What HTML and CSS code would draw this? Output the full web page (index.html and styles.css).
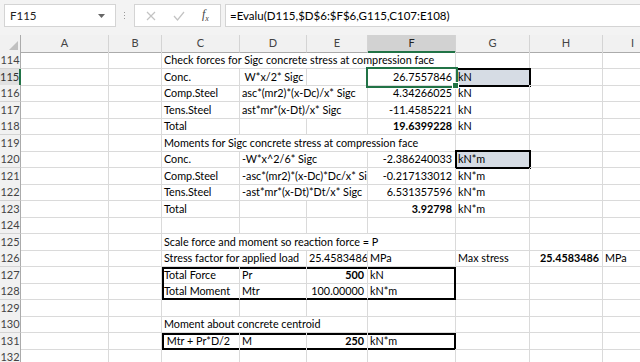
FILE: index.html
```html
<!DOCTYPE html>
<html lang="en">
<head>
  <meta charset="UTF-8">
  <title>Sheet</title>
  <link rel="stylesheet" href="styles.css">
</head>
<body>

  <div class="formula-bar">
    <div class="name-box">
      <span>F115</span>
      <svg class="drop" width="7" height="4" viewBox="0 0 7 4"><path d="M0 0h7L3.5 4z" fill="#666"/></svg>
    </div>
    <div class="grip"><i></i><i></i><i></i></div>
    <div class="buttons">
      <svg width="10" height="10" viewBox="0 0 10 10"><path d="M1 1l8 8M9 1L1 9" stroke="#c3c3c3" stroke-width="1.2" fill="none"/></svg>
      <svg width="12" height="10" viewBox="0 0 12 10"><path d="M1 5l3.5 4L11 1" stroke="#c3c3c3" stroke-width="1.2" fill="none"/></svg>
      <span class="fx">f<sub>x</sub></span>
    </div>
    <div class="formula">=Evalu(D115,$D$6:$F$6,G115,C107:E108)</div>
  </div>

  <div class="sheet">
    <div class="row head">
      <div class="corner"><svg width="9" height="9" viewBox="0 0 9 9"><path d="M9 0v9H0z" fill="#c0c0c0"/></svg></div>
      <div class="ch">A</div><div class="ch">B</div><div class="ch">C</div><div class="ch">D</div><div class="ch">E</div>
      <div class="ch sel">F</div>
      <div class="ch">G</div><div class="ch">H</div><div class="ch">I</div>
    </div>

    <div class="row">
      <div class="rh">114</div><div class="cell"></div><div class="cell"></div>
      <div class="cell span4">Check forces for Sigc concrete stress at compression face</div>
      <div class="cell"></div><div class="cell"></div><div class="cell"></div>
    </div>
    <div class="row">
      <div class="rh sel-row">115</div><div class="cell"></div><div class="cell"></div>
      <div class="cell">Conc.</div><div class="cell">&nbsp;W*x/2* Sigc</div><div class="cell"></div>
      <div class="cell num active">26.7557846</div>
      <div class="cell boxed">kN</div><div class="cell"></div><div class="cell"></div>
    </div>
    <div class="row">
      <div class="rh">116</div><div class="cell"></div><div class="cell"></div>
      <div class="cell">Comp.Steel</div><div class="cell span2">asc*(mr2)*(x-Dc)/x* Sigc</div>
      <div class="cell num">4.34266025</div>
      <div class="cell">kN</div><div class="cell"></div><div class="cell"></div>
    </div>
    <div class="row">
      <div class="rh">117</div><div class="cell"></div><div class="cell"></div>
      <div class="cell">Tens.Steel</div><div class="cell span2">ast*mr*(x-Dt)/x* Sigc</div>
      <div class="cell num">-11.4585221</div>
      <div class="cell">kN</div><div class="cell"></div><div class="cell"></div>
    </div>
    <div class="row">
      <div class="rh">118</div><div class="cell"></div><div class="cell"></div>
      <div class="cell">Total</div><div class="cell"></div><div class="cell"></div>
      <div class="cell num bold">19.6399228</div>
      <div class="cell">kN</div><div class="cell"></div><div class="cell"></div>
    </div>
    <div class="row">
      <div class="rh">119</div><div class="cell"></div><div class="cell"></div>
      <div class="cell span4">Moments for Sigc concrete stress at compression face</div>
      <div class="cell"></div><div class="cell"></div><div class="cell"></div>
    </div>
    <div class="row">
      <div class="rh">120</div><div class="cell"></div><div class="cell"></div>
      <div class="cell">Conc.</div><div class="cell span2">-W*x^2/6* Sigc</div>
      <div class="cell num">-2.386240033</div>
      <div class="cell boxed">kN*m</div><div class="cell"></div><div class="cell"></div>
    </div>
    <div class="row">
      <div class="rh">121</div><div class="cell"></div><div class="cell"></div>
      <div class="cell">Comp.Steel</div><div class="cell span2">-asc*(mr2)*(x-Dc)*Dc/x* Sigc</div>
      <div class="cell num">-0.217133012</div>
      <div class="cell">kN*m</div><div class="cell"></div><div class="cell"></div>
    </div>
    <div class="row">
      <div class="rh">122</div><div class="cell"></div><div class="cell"></div>
      <div class="cell">Tens.Steel</div><div class="cell span2">-ast*mr*(x-Dt)*Dt/x* Sigc</div>
      <div class="cell num">6.531357596</div>
      <div class="cell">kN*m</div><div class="cell"></div><div class="cell"></div>
    </div>
    <div class="row">
      <div class="rh">123</div><div class="cell"></div><div class="cell"></div>
      <div class="cell">Total</div><div class="cell"></div><div class="cell"></div>
      <div class="cell num bold">3.92798</div>
      <div class="cell">kN*m</div><div class="cell"></div><div class="cell"></div>
    </div>
    <div class="row">
      <div class="rh">124</div><div class="cell"></div><div class="cell"></div>
      <div class="cell"></div><div class="cell"></div><div class="cell"></div><div class="cell"></div>
      <div class="cell"></div><div class="cell"></div><div class="cell"></div>
    </div>
    <div class="row">
      <div class="rh">125</div><div class="cell"></div><div class="cell"></div>
      <div class="cell span4">Scale force and moment so reaction force = P</div>
      <div class="cell"></div><div class="cell"></div><div class="cell"></div>
    </div>
    <div class="row">
      <div class="rh">126</div><div class="cell"></div><div class="cell"></div>
      <div class="cell span2">Stress factor for applied load</div>
      <div class="cell num">25.4583486</div>
      <div class="cell">MPa</div>
      <div class="cell">Max stress</div>
      <div class="cell num bold">25.4583486</div>
      <div class="cell">MPa</div>
    </div>
    <div class="row">
      <div class="rh">127</div><div class="cell"></div><div class="cell"></div>
      <div class="cell bl bt">Total Force</div><div class="cell bt">Pr</div>
      <div class="cell num bold bt">500</div>
      <div class="cell bt br">kN</div>
      <div class="cell"></div><div class="cell"></div><div class="cell"></div>
    </div>
    <div class="row">
      <div class="rh">128</div><div class="cell"></div><div class="cell"></div>
      <div class="cell bl bb">Total Moment</div><div class="cell bb">Mtr</div>
      <div class="cell num bb">100.00000</div>
      <div class="cell bb br">kN*m</div>
      <div class="cell"></div><div class="cell"></div><div class="cell"></div>
    </div>
    <div class="row">
      <div class="rh">129</div><div class="cell"></div><div class="cell"></div>
      <div class="cell"></div><div class="cell"></div><div class="cell"></div><div class="cell"></div>
      <div class="cell"></div><div class="cell"></div><div class="cell"></div>
    </div>
    <div class="row">
      <div class="rh">130</div><div class="cell"></div><div class="cell"></div>
      <div class="cell span3">Moment about concrete centroid</div>
      <div class="cell"></div><div class="cell"></div><div class="cell"></div><div class="cell"></div>
    </div>
    <div class="row">
      <div class="rh">131</div><div class="cell"></div><div class="cell"></div>
      <div class="cell bl bt bb">&nbsp;Mtr + Pr*D/2</div><div class="cell bt bb">M</div>
      <div class="cell num bold bt bb">250</div>
      <div class="cell bt bb br">kN*m</div>
      <div class="cell"></div><div class="cell"></div><div class="cell"></div>
    </div>
    <div class="row">
      <div class="rh">132</div><div class="cell"></div><div class="cell"></div>
      <div class="cell"></div><div class="cell"></div><div class="cell"></div><div class="cell"></div>
      <div class="cell"></div><div class="cell"></div><div class="cell"></div>
    </div>
  </div>

</body>
</html>
```

FILE: styles.css
```css
body {
  margin: 0;
  overflow: hidden;
  background: #fff;
  font-family: Lato, "Liberation Sans", sans-serif;
  color: #000;
}

/* formula bar */

.formula-bar {
  display: flex;
  align-items: center;
  height: 35px;
  padding: 0 0 4px 4px;
  box-sizing: border-box;
  background: #f3f3f3;
}

.name-box {
  display: flex;
  align-items: center;
  justify-content: space-between;
  width: 112px;
  height: 23px;
  box-sizing: border-box;
  padding: 0 10px 0 5px;
  background: #fff;
  border: 1px solid #d4d4d4;
  font-size: 11.5px;
  color: #222;
}

.grip {
  display: flex;
  flex-direction: column;
  gap: 2px;
  margin: 0 9px 0 8px;
}

.grip i {
  width: 1px;
  height: 1px;
  background: #999;
}

.buttons {
  display: flex;
  align-items: center;
  gap: 17px;
  width: 87px;
  height: 23px;
  box-sizing: border-box;
  padding-left: 11px;
  background: #fff;
  border: 1px solid #d4d4d4;
}

.fx {
  font-family: "Liberation Serif", serif;
  font-style: italic;
  font-size: 12px;
  color: #444;
}

.fx sub {
  font-size: 8px;
}

.formula {
  flex: 1;
  height: 23px;
  margin-left: 4px;
  padding-left: 4px;
  line-height: 22px;
  box-sizing: border-box;
  background: #fff;
  border: 1px solid #d4d4d4;
  border-right: 0;
  font-size: 11.5px;
  white-space: nowrap;
}

/* grid */

.sheet {
  width: 663px;
  font-size: 10.8px;
}

.row {
  display: grid;
  grid-template-columns: 21px 88px 53px 78px 67px 61px 88px 74px 73px 60px;
  height: 16.5px;
}

.row.head {
  height: 17px;
}

.corner, .ch {
  background: #f1f1f1;
  border-bottom: 1px solid #ababab;
  box-sizing: border-box;
}

.corner {
  display: flex;
  align-items: flex-end;
  justify-content: flex-end;
  padding: 0 2px 2px 0;
  border-right: 1px solid #ababab;
}

.ch {
  border-right: 1px solid #d4d4d4;
  color: #444;
  font-size: 11px;
  line-height: 16px;
  text-align: center;
}

.ch.sel {
  background: #d2d2d2;
  color: #222;
  border-bottom: 2px solid #217346;
}

.rh {
  background: #f1f1f1;
  border-right: 1px solid #ababab;
  border-bottom: 1px solid #d4d4d4;
  box-sizing: border-box;
  color: #444;
  font-size: 11px;
  line-height: 16px;
  text-align: center;
}

.rh.sel-row {
  background: #e1e1e1;
  color: #333;
  border-right: 2px solid #217346;
}

.cell {
  box-sizing: border-box;
  padding: 0 2px;
  border-right: 1px solid #dadada;
  border-bottom: 1px solid #dadada;
  white-space: nowrap;
  overflow: hidden;
  line-height: 16px;
  box-shadow: var(--sl, 0 0 #0000), var(--st, 0 0 #0000), var(--sr, 0 0 #0000), var(--sb, 0 0 #0000);
}

.span2 { grid-column: span 2; }
.span3 { grid-column: span 3; }
.span4 { grid-column: span 4; }

.cell.num {
  text-align: right;
  padding-right: 3px;
}

.cell.bold {
  font-weight: bold;
}

.cell.active {
  position: relative;
  overflow: visible;
  outline: 2px solid #217346;
}

.cell.active::after {
  content: "";
  position: absolute;
  right: -4px;
  bottom: -4px;
  width: 5px;
  height: 5px;
  background: #217346;
  border: 1px solid #fff;
}

.cell.boxed {
  background: #d6dce4;
  outline: 2px solid #000;
  outline-offset: -1px;
}

/* thick box edges */
.bl { --sl: inset 2px 0 #000; }
.bt { --st: inset 0 2px #000; }
.br { --sr: inset -1px 0 #000; border-right-color: #000; }
.bb { --sb: inset 0 -1px #000; border-bottom-color: #000; }
```
